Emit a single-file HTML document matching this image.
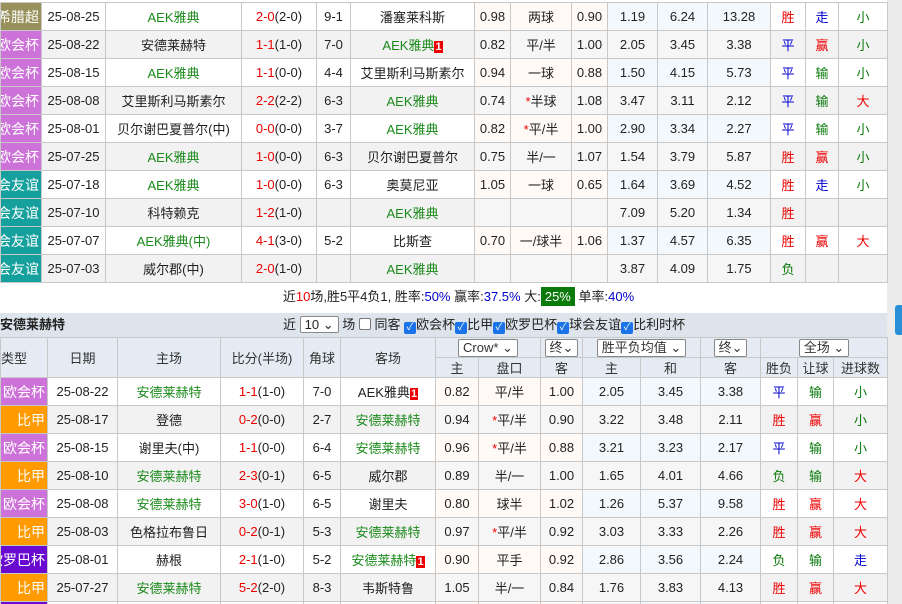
<!DOCTYPE html>
<html><head><meta charset="utf-8"><style>
*{margin:0;padding:0;box-sizing:border-box}
html,body{width:902px;height:604px;overflow:hidden}
body{background:#fff;font-family:"Liberation Sans","Noto Sans CJK SC",sans-serif;font-size:13px;color:#222;position:relative}
table{border-collapse:collapse;table-layout:fixed;position:absolute;left:0}
td{border:1px solid #c8c8c8;text-align:center;height:28px;white-space:nowrap;overflow:hidden;padding:0}
td.t{color:#fff;text-align:right;padding-right:2px;direction:rtl;font-size:14px}
.g{color:#1a8a1a}.r{color:#e00}.b{color:#00c}.dg{color:#0a7a0a}
tr.a td{background:#fff}tr.z td{background:#f2f2f2}
tr.a td.o{background:#fffaf6}tr.a td.e{background:#f2f8fc}
tr.z td.o,tr.z td.e{background:#f6f6f6}
.n{background:#e00;color:#fff;font-size:11px;padding:0 1px;font-weight:bold}
.s{color:#e00}
td.gr{background:#99915c!important}td.pu{background:#cc72d8!important}td.te{background:#15a09e!important}td.or{background:#ff9b00!important}td.vi{background:#6a0ad0!important}
.hd td{background:#e4ebf2;height:20px;color:#333}
.sel{display:inline-block;border:1px solid #888;background:#fff;height:18px;line-height:16px;padding:0 4px;font-size:13px;border-radius:2px}
.cb{display:inline-block;width:12px;height:12px;background:#1a73e8;border-radius:2px;vertical-align:-1px;color:#fff;font-size:10px;line-height:12px;text-align:center}
.cbw{display:inline-block;width:12px;height:12px;border:1px solid #777;border-radius:2px;vertical-align:-1px;background:#fff}
</style></head><body>
<div style="position:absolute;left:887px;top:0;width:15px;height:604px;background:#ececec"></div>
<div style="position:absolute;left:895px;top:305px;width:7px;height:30px;background:#2a8fd6;border-radius:3px 0 0 3px"></div>
<table style="top:2px;width:887px">
<colgroup><col style="width:41px"><col style="width:64px"><col style="width:136px"><col style="width:75px"><col style="width:34px"><col style="width:124px"><col style="width:36px"><col style="width:61px"><col style="width:36px"><col style="width:50px"><col style="width:50px"><col style="width:63px"><col style="width:35px"><col style="width:33px"><col style="width:49px"></colgroup>
<tr class="a"><td class="t gr">希腊超</td><td>25-08-25</td><td class="g">AEK雅典</td><td><span class="s">2-0</span>(2-0)</td><td>9-1</td><td>潘塞莱科斯</td><td class="o">0.98</td><td class="o">两球</td><td class="o">0.90</td><td class="e">1.19</td><td class="e">6.24</td><td class="e">13.28</td><td class="r">胜</td><td class="b">走</td><td class="dg">小</td></tr>
<tr class="z"><td class="t pu">欧会杯</td><td>25-08-22</td><td>安德莱赫特</td><td><span class="s">1-1</span>(1-0)</td><td>7-0</td><td class="g">AEK雅典<span class="n">1</span></td><td class="o">0.82</td><td class="o">平/半</td><td class="o">1.00</td><td class="e">2.05</td><td class="e">3.45</td><td class="e">3.38</td><td class="b">平</td><td class="r">赢</td><td class="dg">小</td></tr>
<tr class="a"><td class="t pu">欧会杯</td><td>25-08-15</td><td class="g">AEK雅典</td><td><span class="s">1-1</span>(0-0)</td><td>4-4</td><td>艾里斯利马斯素尔</td><td class="o">0.94</td><td class="o">一球</td><td class="o">0.88</td><td class="e">1.50</td><td class="e">4.15</td><td class="e">5.73</td><td class="b">平</td><td class="dg">输</td><td class="dg">小</td></tr>
<tr class="z"><td class="t pu">欧会杯</td><td>25-08-08</td><td>艾里斯利马斯素尔</td><td><span class="s">2-2</span>(2-2)</td><td>6-3</td><td class="g">AEK雅典</td><td class="o">0.74</td><td class="o"><span class="s">*</span>半球</td><td class="o">1.08</td><td class="e">3.47</td><td class="e">3.11</td><td class="e">2.12</td><td class="b">平</td><td class="dg">输</td><td class="r">大</td></tr>
<tr class="a"><td class="t pu">欧会杯</td><td>25-08-01</td><td>贝尔谢巴夏普尔(中)</td><td><span class="s">0-0</span>(0-0)</td><td>3-7</td><td class="g">AEK雅典</td><td class="o">0.82</td><td class="o"><span class="s">*</span>平/半</td><td class="o">1.00</td><td class="e">2.90</td><td class="e">3.34</td><td class="e">2.27</td><td class="b">平</td><td class="dg">输</td><td class="dg">小</td></tr>
<tr class="z"><td class="t pu">欧会杯</td><td>25-07-25</td><td class="g">AEK雅典</td><td><span class="s">1-0</span>(0-0)</td><td>6-3</td><td>贝尔谢巴夏普尔</td><td class="o">0.75</td><td class="o">半/一</td><td class="o">1.07</td><td class="e">1.54</td><td class="e">3.79</td><td class="e">5.87</td><td class="r">胜</td><td class="r">赢</td><td class="dg">小</td></tr>
<tr class="a"><td class="t te">球会友谊</td><td>25-07-18</td><td class="g">AEK雅典</td><td><span class="s">1-0</span>(0-0)</td><td>6-3</td><td>奥莫尼亚</td><td class="o">1.05</td><td class="o">一球</td><td class="o">0.65</td><td class="e">1.64</td><td class="e">3.69</td><td class="e">4.52</td><td class="r">胜</td><td class="b">走</td><td class="dg">小</td></tr>
<tr class="z"><td class="t te">球会友谊</td><td>25-07-10</td><td>科特赖克</td><td><span class="s">1-2</span>(1-0)</td><td></td><td class="g">AEK雅典</td><td class="o"></td><td class="o"></td><td class="o"></td><td class="e">7.09</td><td class="e">5.20</td><td class="e">1.34</td><td class="r">胜</td><td></td><td></td></tr>
<tr class="a"><td class="t te">球会友谊</td><td>25-07-07</td><td class="g">AEK雅典(中)</td><td><span class="s">4-1</span>(3-0)</td><td>5-2</td><td>比斯查</td><td class="o">0.70</td><td class="o">一/球半</td><td class="o">1.06</td><td class="e">1.37</td><td class="e">4.57</td><td class="e">6.35</td><td class="r">胜</td><td class="r">赢</td><td class="r">大</td></tr>
<tr class="z"><td class="t te">球会友谊</td><td>25-07-03</td><td>威尔郡(中)</td><td><span class="s">2-0</span>(1-0)</td><td></td><td class="g">AEK雅典</td><td class="o"></td><td class="o"></td><td class="o"></td><td class="e">3.87</td><td class="e">4.09</td><td class="e">1.75</td><td style="color:#0a7a0a">负</td><td></td><td></td></tr>
</table>
<div style="position:absolute;left:0;top:283px;width:887px;height:30px;line-height:28px;text-align:center;padding-left:30px">近<span class="r">10</span>场,胜5平4负1, 胜率:<span class="b">50%</span> 赢率:<span class="b">37.5%</span> 大:<span style="background:#0a7a0a;color:#fff;padding:2px 4px">25%</span> 单率:<span class="b">40%</span></div>
<div style="position:absolute;left:0;top:313px;width:887px;height:24px;background:#dde4ec;line-height:24px"><b style="position:absolute;left:0">安德莱赫特</b><span style="position:absolute;left:283px">近 <span class="sel" style="height:17px;line-height:15px">10 ⌄</span> 场 <span class="cbw"></span> 同客 <span class="cb">✓</span>欧会杯<span class="cb">✓</span>比甲<span class="cb">✓</span>欧罗巴杯<span class="cb">✓</span>球会友谊<span class="cb">✓</span>比利时杯</span></div>
<table style="top:337px;width:887px">
<colgroup><col style="width:47px"><col style="width:70px"><col style="width:103px"><col style="width:83px"><col style="width:37px"><col style="width:95px"><col style="width:43px"><col style="width:62px"><col style="width:42px"><col style="width:58px"><col style="width:60px"><col style="width:60px"><col style="width:37px"><col style="width:36px"><col style="width:54px"></colgroup>
<tr class="hd"><td rowspan="2" style="text-align:left;height:40px">类型</td><td rowspan="2">日期</td><td rowspan="2">主场</td><td rowspan="2">比分(半场)</td><td rowspan="2">角球</td><td rowspan="2">客场</td><td colspan="2"><span class="sel">Crow* ⌄</span></td><td><span class="sel">终⌄</span></td><td colspan="2"><span class="sel">胜平负均值 ⌄</span></td><td><span class="sel">终⌄</span></td><td colspan="3"><span class="sel">全场 ⌄</span></td></tr>
<tr class="hd"><td>主</td><td>盘口</td><td>客</td><td>主</td><td>和</td><td>客</td><td>胜负</td><td>让球</td><td>进球数</td></tr>
<tr class="a"><td class="t pu">欧会杯</td><td>25-08-22</td><td class="g">安德莱赫特</td><td><span class="s">1-1</span>(1-0)</td><td>7-0</td><td>AEK雅典<span class="n">1</span></td><td class="o">0.82</td><td class="o">平/半</td><td class="o">1.00</td><td class="e">2.05</td><td class="e">3.45</td><td class="e">3.38</td><td class="b">平</td><td class="dg">输</td><td class="dg">小</td></tr>
<tr class="z"><td class="t or">比甲</td><td>25-08-17</td><td>登德</td><td><span class="s">0-2</span>(0-0)</td><td>2-7</td><td class="g">安德莱赫特</td><td class="o">0.94</td><td class="o"><span class="s">*</span>平/半</td><td class="o">0.90</td><td class="e">3.22</td><td class="e">3.48</td><td class="e">2.11</td><td class="r">胜</td><td class="r">赢</td><td class="dg">小</td></tr>
<tr class="a"><td class="t pu">欧会杯</td><td>25-08-15</td><td>谢里夫(中)</td><td><span class="s">1-1</span>(0-0)</td><td>6-4</td><td class="g">安德莱赫特</td><td class="o">0.96</td><td class="o"><span class="s">*</span>平/半</td><td class="o">0.88</td><td class="e">3.21</td><td class="e">3.23</td><td class="e">2.17</td><td class="b">平</td><td class="dg">输</td><td class="dg">小</td></tr>
<tr class="z"><td class="t or">比甲</td><td>25-08-10</td><td class="g">安德莱赫特</td><td><span class="s">2-3</span>(0-1)</td><td>6-5</td><td>威尔郡</td><td class="o">0.89</td><td class="o">半/一</td><td class="o">1.00</td><td class="e">1.65</td><td class="e">4.01</td><td class="e">4.66</td><td class="dg">负</td><td class="dg">输</td><td class="r">大</td></tr>
<tr class="a"><td class="t pu">欧会杯</td><td>25-08-08</td><td class="g">安德莱赫特</td><td><span class="s">3-0</span>(1-0)</td><td>6-5</td><td>谢里夫</td><td class="o">0.80</td><td class="o">球半</td><td class="o">1.02</td><td class="e">1.26</td><td class="e">5.37</td><td class="e">9.58</td><td class="r">胜</td><td class="r">赢</td><td class="r">大</td></tr>
<tr class="z"><td class="t or">比甲</td><td>25-08-03</td><td>色格拉布鲁日</td><td><span class="s">0-2</span>(0-1)</td><td>5-3</td><td class="g">安德莱赫特</td><td class="o">0.97</td><td class="o"><span class="s">*</span>平/半</td><td class="o">0.92</td><td class="e">3.03</td><td class="e">3.33</td><td class="e">2.26</td><td class="r">胜</td><td class="r">赢</td><td class="r">大</td></tr>
<tr class="a"><td class="t vi">欧罗巴杯</td><td>25-08-01</td><td>赫根</td><td><span class="s">2-1</span>(1-0)</td><td>5-2</td><td class="g">安德莱赫特<span class="n">1</span></td><td class="o">0.90</td><td class="o">平手</td><td class="o">0.92</td><td class="e">2.86</td><td class="e">3.56</td><td class="e">2.24</td><td class="dg">负</td><td class="dg">输</td><td class="b">走</td></tr>
<tr class="z"><td class="t or">比甲</td><td>25-07-27</td><td class="g">安德莱赫特</td><td><span class="s">5-2</span>(2-0)</td><td>8-3</td><td>韦斯特鲁</td><td class="o">1.05</td><td class="o">半/一</td><td class="o">0.84</td><td class="e">1.76</td><td class="e">3.83</td><td class="e">4.13</td><td class="r">胜</td><td class="r">赢</td><td class="r">大</td></tr>
<tr class="a"><td class="t vi">欧罗巴杯</td><td></td><td></td><td></td><td></td><td></td><td class="o"></td><td class="o"></td><td class="o"></td><td class="e"></td><td class="e"></td><td class="e"></td><td></td><td></td><td></td></tr>
</table>
</body></html>
